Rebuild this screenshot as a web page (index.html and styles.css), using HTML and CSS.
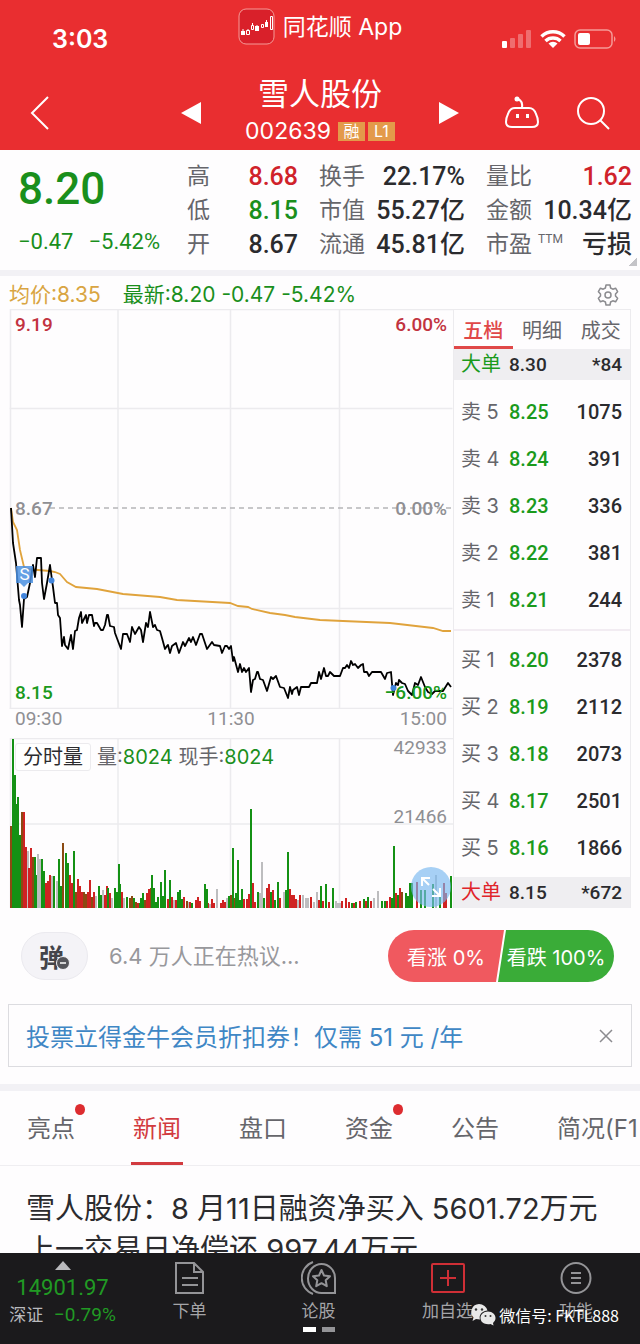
FILE: index.html
```
<!DOCTYPE html>
<html lang="zh-CN">
<head>
  <meta charset="UTF-8" />
  <meta name="viewport" content="width=device-width, initial-scale=1.0"/>
  <title>雪人股份 002639</title>
  <link rel="stylesheet" href="styles.css">
</head>
<body>
  <header class="header">
    <div class="status-bar">
      <span class="time">3:03</span>
      <div class="app-name">
        <svg width="38" height="38" viewBox="0 0 38 38" fill="none" stroke="#fff">
          <rect x="1" y="1" width="35" height="35" rx="7" stroke="#f59a96" fill="#d9202a"/>
          <path d="M3 23h4v4H3zM17 18h4v5h-4zM27 14h3v5h-3z" fill="#fff" stroke="none"/>
          <path d="M8.500 22.500h3v4h-3zM13.500 17.500h2v4h-2zM23.500 16.500h2v3h-2zM32.500 8.500h2v13h-2zM5 23v-2M10 22v-1M14.500 17v-2M19 18v-1M28.500 14v-2"/>
        </svg>
        <span>同花顺 App</span>
      </div>
      <div class="status-icons">
        <svg width="30" height="20" viewBox="0 0 30 20" fill="#fff">
          <rect x="0" y="12" width="5" height="7" rx="1"/>
          <g opacity=".3">
            <rect x="8" y="9" width="5" height="10" rx="1"/>
            <rect x="16" y="5" width="5" height="14" rx="1"/>
            <rect x="24" y="1" width="5" height="18" rx="1"/>
          </g>
        </svg>
        <svg width="26" height="20" viewBox="0 0 26 20" fill="none" stroke="#fff" stroke-width="3.500">
          <path d="M1.500 7.500a16.500 16.500 0 0 1 23 0M5.500 12a11 11 0 0 1 15 0"/>
          <path d="M13 19l-4.500-4.500a6.500 6.500 0 0 1 9 0z" fill="#fff" stroke="none"/>
        </svg>
        <svg width="42" height="20" viewBox="0 0 42 20">
          <rect x="1" y="1" width="37" height="18" rx="5" fill="none" stroke="#f59a96" stroke-width="1.500"/>
          <rect x="4" y="4" width="12" height="12" rx="2" fill="#fff"/>
          <path d="M40 7q3 3 0 6z" fill="#f59a96"/>
        </svg>
      </div>
    </div>
    <nav class="nav">
      <button class="icon-btn" aria-label="返回">
        <svg width="20" height="34" viewBox="0 0 20 34" fill="none" stroke="#fff" stroke-width="2"><path d="M18 1L2 17l16 16"/></svg>
      </button>
      <div class="stock">
        <button class="icon-btn" aria-label="上一只">
          <svg width="20" height="22" viewBox="0 0 20 22" fill="#fff"><path d="M20 0v22L0 11z"/></svg>
        </button>
        <div class="stock-title">
          <h1>雪人股份</h1>
          <p>002639 <span class="tag">融</span><span class="tag">L1</span></p>
        </div>
        <button class="icon-btn" aria-label="下一只">
          <svg width="20" height="22" viewBox="0 0 20 22" fill="#fff"><path d="M0 0v22l20-11z"/></svg>
        </button>
      </div>
      <div class="nav-actions">
        <button class="icon-btn" aria-label="助手">
          <svg width="36" height="34" viewBox="0 0 36 34" fill="none" stroke="#fff" stroke-width="2">
            <path d="M11 12h14q5 0 7 6 2 4 2 8 0 5-6 5H8q-6 0-6-5 0-4 2-8 2-6 7-6z"/>
            <path d="M18 12q1-7-4-9"/>
            <circle cx="13" cy="3" r="2.500" fill="#fff" stroke="none"/>
            <path d="M13.500 18v4M23.500 18v4" stroke-width="3"/>
          </svg>
        </button>
        <button class="icon-btn" aria-label="搜索">
          <svg width="34" height="34" viewBox="0 0 34 34" fill="none" stroke="#fff" stroke-width="2"><circle cx="15" cy="15" r="13"/><path d="M24 24l9 9"/></svg>
        </button>
      </div>
    </nav>
  </header>

  <main class="content">
    <section class="quote">
      <div class="quote-price">
        <strong>8.20</strong>
        <p><span>−0.47</span><span>−5.42%</span></p>
      </div>
      <dl class="quote-col">
        <div><dt>高</dt><dd class="up">8.68</dd></div>
        <div><dt>低</dt><dd class="down">8.15</dd></div>
        <div><dt>开</dt><dd>8.67</dd></div>
      </dl>
      <dl class="quote-col">
        <div><dt>换手</dt><dd>22.17%</dd></div>
        <div><dt>市值</dt><dd>55.27亿</dd></div>
        <div><dt>流通</dt><dd>45.81亿</dd></div>
      </dl>
      <dl class="quote-col">
        <div><dt>量比</dt><dd class="up">1.62</dd></div>
        <div><dt>金额</dt><dd>10.34亿</dd></div>
        <div><dt>市盈<sup>TTM</sup></dt><dd>亏损</dd></div>
      </dl>
    </section>

    <section class="market">
      <div class="summary">
        <span class="avg">均价:8.35</span>
        <span class="latest">最新:8.20 -0.47 -5.42%</span>
        <button class="icon-btn settings" aria-label="设置">
          <svg width="22" height="22" viewBox="0 0 22 22" fill="none" stroke="#8b8b8f" stroke-width="1.500" stroke-linejoin="round">
            <path d="M9 1h4l.6 3 2.200 1.200 2.800-1 2 3.500L18.500 10v2l2.100 2.300-2 3.500-2.800-1L13.600 18 13 21H9l-.6-3-2.200-1.200-2.800 1-2-3.500L3.500 12v-2L1.400 7.700l2-3.500 2.800 1L8.400 4z"/>
            <circle cx="11" cy="11" r="3"/>
          </svg>
        </button>
      </div>

      <div class="board">
        <div class="charts">
          <div class="chart price-chart">
            <svg class="plot" viewBox="0 0 444 400" preserveAspectRatio="none" fill="none">
              <path class="grid-line" d="M1 .5h443M.5 99.500h443M.5 299.500h443M.5 399.500h443M1.500 0v400M109 0v400M221.500 0v400M330.500 0v400"/>
              <path d="M41 199h403" stroke="#b5b5b8" stroke-width="1.500" stroke-dasharray="5 4"/>
              <path stroke="#e0a33c" stroke-width="1.800" d="M2 199L4 213 8 221 11 241 15 258 18 260 29 261 41 262 46 263 51 265 58 273 67 278 88 280 114 285 151 288 168 291 221 294 229 297 239 298 243 300 261 304 276 306 286 308 311 311 334 312 381 314 424 319 434 322 442 322"/>
              <path stroke="#000" stroke-width="1.800" stroke-linejoin="round" d="M2 199L4 234 7 254 10 291 11 296 13 318 15 290 18 288 21 274 24 256 26 268 28 249 32 249 33 274 35 290 38 274 41 256 43 271 44 278 46 294 48 294 49 306 51 309 53 337 55 328 56 336 59 340 62 326 64 340 66 322 68 321 70 309 72 303 73 314 77 306 78 314 80 306 83 306 85 317 86 314 88 314 92 321 94 321 96 316 98 306 99 306 101 317 105 318 106 324 112 340 114 325 118 325 121 333 123 318 126 325 130 318 132 321 134 333 137 314 139 318 141 303 144 318 146 316 148 321 151 322 153 329 156 340 158 337 159 336 161 344 163 337 167 334 170 344 174 333 176 337 180 329 182 333 184 328 187 336 191 325 193 325 198 340 203 333 205 336 211 337 213 344 216 337 218 337 220 340 222 337 224 352 225 348 229 363 231 355 233 363 235 359 237 363 240 359 242 383 244 371 246 370 248 363 249 363 251 370 254 371 258 382 262 368 264 370 267 367 271 378 275 379 279 389 281 378 283 385 284 381 288 378 290 386 292 378 300 378 302 374 308 374 310 363 312 370 315 359 317 367 319 367 321 363 325 367 331 367 334 359 336 359 338 356 340 359 342 352 344 356 346 355 349 359 352 356 354 355 355 363 358 363 360 367 363 363 372 363 376 370 378 364 382 363 384 386 387 374 389 376 390 371 393 374 396 375 399 382 403 386 406 374 409 376 412 368 416 378 419 383 423 385 426 382 434 382 439 374 442 378"/>
              <path d="M7 257h17v17h-5l-4 4-4-4H7z" fill="#4a8fe0" opacity=".85"/>
              <g fill="#4285dc"><circle cx="15" cy="287" r="3"/><circle cx="42.500" cy="271.500" r="3"/><circle cx="384.500" cy="379" r="3"/></g>
              <text class="sell-mark" x="15.500" y="271" text-anchor="middle">S</text>
            </svg>
            <div class="labels">
              <div class="up"><span>9.19</span><span>6.00%</span></div>
              <div><span>8.67</span><span>0.00%</span></div>
              <div class="down"><span>8.15</span><span>−6.00%</span></div>
            </div>
          </div>
          <div class="time-axis"><span>09:30</span><span>11:30</span><span>15:00</span></div>
          <div class="chart volume-chart">
            <svg class="plot" viewBox="0 0 444 170" preserveAspectRatio="none" fill="none" stroke-width="2">
              <path class="grid-line" d="M1 .5h443M1 86h443M1.500 0v170M109 0v170M221.500 0v170M330.500 0v170"/>
              <path stroke="#bdbdbf" d="M19 170v-57M29 170v-54M31 170v-49M43 170v-32M48 170v-27M87 170v-12M94 170v-18M103 170v-10M115 170v-10M165 170v-8M179 170v-6M201 170v-4M208 170v-19M218 170v-10M251 170v-15M253 170v-46M275 170v-16M289 170v-8M294 170v-13M297 170v-10M299 170v-10M305 170v-6M308 170v-16M327 170v-7M329 170v-5M331 170v-5M365 170v-10M369 170v-17M427 170v-33"/>
              <path stroke="#8b4a12" d="M2 170v-82M13 170v-96M24 170v-51M54 170v-65M67 170v-16M75 170v-16M77 170v-14M83 170v-11M121 170v-10M123 170v-12M127 170v-6M136 170v-8M142 170v-20M178 170v-7M222 170v-13M225 170v-10M393 170v-16"/>
              <path stroke="#cf2222" d="M15 170v-96M17 170v-61M20 170v-40M22 170v-60M37 170v-25M39 170v-27M41 170v-33M61 170v-33M63 170v-25M69 170v-29M71 170v-22M73 170v-16M79 170v-16M81 170v-28M85 170v-16M96 170v-13M98 170v-22M101 170v-15M113 170v-16M129 170v-5M138 170v-15M140 170v-19M159 170v-9M163 170v-11M167 170v-8M175 170v-11M181 170v-6M187 170v-8M189 170v-11M191 170v-7M199 170v-5M203 170v-9M205 170v-5M212 170v-5M214 170v-8M216 170v-6M235 170v-9M238 170v-9M240 170v-14M244 170v-25M246 170v-6M258 170v-20M260 170v-24M264 170v-18M271 170v-10M281 170v-19M283 170v-13M285 170v-13M287 170v-9M291 170v-13M302 170v-11M310 170v-8M314 170v-7M320 170v-6M333 170v-7M337 170v-10M340 170v-6M345 170v-5M351 170v-7M357 170v-7M362 170v-7M378 170v-7M381 170v-11M387 170v-15M391 170v-20M408 170v-26M435 170v-25M437 170v-15"/>
              <path stroke="#149114" d="M4 170v-169M6 170v-133M7 170v-104M9 170v-111M11 170v-73M26 170v-51M27 170v-33M33 170v-49M35 170v-37M45 170v-32M50 170v-49M52 170v-22M57 170v-55M59 170v-45M65 170v-57M90 170v-22M92 170v-13M99 170v-20M106 170v-20M108 170v-16M110 170v-44M111 170v-24M118 170v-11M125 170v-10M131 170v-5M132 170v-10M134 170v-15M143 170v-33M145 170v-20M147 170v-6M149 170v-11M152 170v-26M154 170v-12M156 170v-38M161 170v-28M169 170v-16M171 170v-18M173 170v-9M183 170v-5M196 170v-24M198 170v-19M220 170v-12M224 170v-60M227 170v-15M229 170v-48M231 170v-8M233 170v-19M242 170v-99M249 170v-16M255 170v-10M262 170v-16M266 170v-8M269 170v-26M277 170v-18M279 170v-56M312 170v-22M317 170v-24M324 170v-20M343 170v-5M347 170v-6M355 170v-9M359 170v-11M373 170v-7M376 170v-7M383 170v-10M385 170v-62M389 170v-13M397 170v-15M399 170v-12M401 170v-25M403 170v-25M412 170v-18M416 170v-18M424 170v-24M431 170v-12M442 170v-32"/>
            </svg>
            <div class="legend">
              <button class="indicator">分时量</button>
              <span>量:<b>8024</b></span>
              <span>现手:<b>8024</b></span>
            </div>
            <div class="volume-scale"><span>42933</span><span>21466</span></div>
            <button class="expand" aria-label="全屏">
              <svg width="20" height="20" viewBox="0 0 20 20" fill="none" stroke="#fff" stroke-width="2"><path d="M1 9V1h8M1 1l7 7M19 11v8h-8M19 19l-7-7"/></svg>
            </button>
          </div>
        </div>

        <div class="orders">
          <div class="order-tabs">
            <button class="active">五档</button>
            <button>明细</button>
            <button>成交</button>
          </div>
          <table class="order-table">
            <tbody class="big-order">
              <tr><th class="down" scope="row">大单</th><td>8.30</td><td>*84</td></tr>
            </tbody>
            <tbody class="levels asks">
              <tr><th scope="row">卖 5</th><td>8.25</td><td>1075</td></tr>
              <tr><th scope="row">卖 4</th><td>8.24</td><td>391</td></tr>
              <tr><th scope="row">卖 3</th><td>8.23</td><td>336</td></tr>
              <tr><th scope="row">卖 2</th><td>8.22</td><td>381</td></tr>
              <tr><th scope="row">卖 1</th><td>8.21</td><td>244</td></tr>
            </tbody>
            <tbody class="levels bids">
              <tr><th scope="row">买 1</th><td>8.20</td><td>2378</td></tr>
              <tr><th scope="row">买 2</th><td>8.19</td><td>2112</td></tr>
              <tr><th scope="row">买 3</th><td>8.18</td><td>2073</td></tr>
              <tr><th scope="row">买 4</th><td>8.17</td><td>2501</td></tr>
              <tr><th scope="row">买 5</th><td>8.16</td><td>1866</td></tr>
            </tbody>
            <tbody class="big-order">
              <tr><th class="up" scope="row">大单</th><td>8.15</td><td>*672</td></tr>
            </tbody>
          </table>
        </div>
      </div>
    </section>

    <section class="discuss">
      <button class="danmu" aria-label="弹幕">弹
        <svg width="14" height="14" viewBox="0 0 14 14"><circle cx="7" cy="7" r="6.500" fill="#55555a" stroke="#f2f1f5"/><path d="M4 7h6" stroke="#fff" stroke-width="1.500"/></svg>
      </button>
      <input class="discuss-input" type="text" aria-label="参与讨论" placeholder="6.4 万人正在热议...">
      <div class="vote">
        <button class="vote-up">看涨 0%</button>
        <button class="vote-down">看跌 100%</button>
      </div>
    </section>

    <div class="promo">
      <a href="#">投票立得金牛会员折扣券！仅需 51 元 /年</a>
      <button class="icon-btn" aria-label="关闭">
        <svg width="14" height="14" viewBox="0 0 14 14" stroke="#8b8b8f" stroke-width="1.500"><path d="M1 1l12 12M13 1L1 13"/></svg>
      </button>
    </div>

    <nav class="tabs">
      <a href="#" class="dot">亮点</a>
      <a href="#" class="active">新闻</a>
      <a href="#">盘口</a>
      <a href="#" class="dot">资金</a>
      <a href="#">公告</a>
      <a href="#">简况(F1</a>
    </nav>

    <article class="news">雪人股份：8 月11日融资净买入 5601.72万元<br>上一交易日净偿还 997.44万元</article>
  </main>

  <footer class="toolbar">
    <a href="#" class="index">
      <svg width="16" height="9" viewBox="0 0 16 9" fill="#b9b9bc"><path d="M8 0l8 9H0z"/></svg>
      <span class="index-value">14901.97</span>
      <span class="index-change">深证 <b>−0.79%</b></span>
    </a>
    <a href="#">
      <svg width="34" height="34" viewBox="0 0 34 34" fill="none" stroke="#949497" stroke-width="2"><path d="M3 2h18l9 9v21H3zM21 2v9h9M9 17h16M9 24h16"/></svg>
      下单
    </a>
    <a href="#">
      <svg width="36" height="34" viewBox="0 0 36 34" fill="none" stroke="#949497" stroke-width="2">
        <path d="M20.500 3A13.500 14 0 0 1 34 17v15H20.500a13.500 14.500 0 0 1 0-29zM12 1a17 17 0 0 0 0 32"/>
        <path d="M20.500 9l2.500 5.500 6 .7-4.300 4 1.100 6-5.300-3-5.300 3 1.100-6-4.300-4 6-.7z" stroke-linejoin="round"/>
      </svg>
      论股
      <span class="pager"><i></i><i></i></span>
    </a>
    <a href="#">
      <svg width="34" height="34" viewBox="0 0 34 34" fill="none" stroke="#cf2f36" stroke-width="2"><rect x="1" y="3" width="32" height="28" rx="1"/><path d="M17 9v16M9 17h16"/></svg>
      加自选
    </a>
    <a href="#">
      <svg width="34" height="34" viewBox="0 0 34 34" fill="none" stroke="#949497" stroke-width="2"><ellipse cx="17" cy="17" rx="14.500" ry="15"/><path d="M12 12h10M12 17h10M12 22h10"/></svg>
      功能
    </a>
    <div class="watermark">
      <svg width="26" height="22" viewBox="0 0 26 22">
        <path d="M9 0a9 8 0 0 1 8.500 6.500C12 7 8.500 11 10 15.500L6 15l-3.500 2 1-3.500A8 8 0 0 1 9 0z" fill="#e8e8e8"/>
        <path d="M18 7.500c4.500 0 7.500 3 7.500 6.500 0 2-1 3.500-2.500 5l.5 2.500-3-1.500c-5.500 1-10-1.500-10-6 0-3.500 3-6.500 7.500-6.500z" fill="#e8e8e8"/>
        <g fill="#333"><circle cx="6" cy="5.500" r="1.200"/><circle cx="12" cy="5.500" r="1.200"/><circle cx="15.500" cy="12" r="1"/><circle cx="20.500" cy="12" r="1"/></g>
      </svg>
      微信号: FKTL888
    </div>
  </footer>
</body>
</html>
```
FILE: styles.css
```
* {
  box-sizing: border-box;
}

body {
  margin: 0;
  height: 100vh;
  display: flex;
  flex-direction: column;
  overflow: hidden;
  background: #fefdfe;
  color: #2b2b2e;
  font-family: Inter, 'Noto Sans CJK SC', sans-serif;
  font-size: 20px;
  font-weight: 400;
}

h1, p, dl, dd {
  margin: 0;
}

button {
  padding: 0;
  border: none;
  background: none;
  color: inherit;
  font: inherit;
  cursor: pointer;
}

a {
  color: inherit;
  text-decoration: none;
}

svg {
  display: block;
  flex: none;
}

.up {
  color: #d0222a;
}

.down {
  color: #1a8f1c;
}

.icon-btn {
  display: flex;
}

/* header */
.header {
  flex: none;
  background: #e92e30;
  color: #fff;
}

.status-bar {
  display: grid;
  grid-template-columns: 1fr auto 1fr;
  align-items: end;
  height: 56px;
}

.time {
  padding-left: 52px;
  font-size: 25px;
  font-weight: 600;
  line-height: 34px;
}

.app-name {
  display: flex;
  align-items: center;
  align-self: start;
  gap: 7px;
  padding-top: 8px;
  font-size: 23px;
  line-height: 38px;
}

.status-icons {
  display: flex;
  align-items: center;
  justify-content: flex-end;
  gap: 8px;
  height: 34px;
  padding-right: 24px;
}

.nav {
  display: grid;
  grid-template-columns: 1fr 278px 1fr;
  align-items: center;
  height: 94px;
  padding: 20px 30px 0;
}

.stock,
.nav-actions {
  display: flex;
  align-items: center;
  justify-content: space-between;
}

.nav-actions {
  justify-content: flex-end;
  gap: 36px;
}

.stock-title {
  text-align: center;
}

.stock-title h1 {
  font-size: 31px;
  font-weight: 400;
  line-height: 36px;
}

.stock-title p {
  display: flex;
  align-items: center;
  justify-content: center;
  gap: 3px;
  font-size: 23px;
  line-height: 38px;
}

.tag {
  width: 27px;
  background: #e39a4a;
  font-size: 16px;
  line-height: 19px;
}

.tag:first-child {
  margin-left: 4px;
}

/* quote */
.quote {
  position: relative;
  display: grid;
  grid-template-columns: 148fr 111fr 146fr 146fr;
  column-gap: 21px;
  height: 120px;
  padding: 10px 8px 0 18px;
  font-family: Roboto, 'Noto Sans CJK SC', sans-serif;
}

.quote::after {
  content: '';
  position: absolute;
  right: 3px;
  bottom: 4px;
  width: 8px;
  height: 8px;
  background: linear-gradient(135deg, transparent 50%, #c4c4c8 50%);
}

.quote-price {
  color: #1a8f1c;
}

.quote-price strong {
  display: block;
  font-size: 44px;
  font-weight: 500;
  line-height: 58px;
}

.quote-price p {
  display: flex;
  gap: 15px;
  padding-top: 8px;
  font-size: 22px;
  line-height: 32px;
}

.quote-col div {
  display: flex;
  justify-content: space-between;
  line-height: 34px;
}

.quote-col dt {
  color: #66666b;
  font-size: 23px;
  white-space: nowrap;
}

.quote-col dd {
  font-size: 25px;
  font-weight: 500;
}

.quote-col sup {
  margin-left: 6px;
  font-size: 12px;
  line-height: 1;
}

/* market */
.market {
  padding: 0 9px;
  border-top: 6px solid #f2f1f5;
}

.summary {
  display: flex;
  align-items: center;
  gap: 22px;
  height: 33px;
  padding-top: 4px;
  font-size: 21px;
  line-height: 28px;
}

.avg {
  color: #d9a542;
}

.latest {
  color: #1a8f1c;
}

.settings {
  margin-left: auto;
  margin-right: 12px;
}

.board {
  display: grid;
  grid-template-columns: 444fr 178fr;
}

.chart {
  display: grid;
  position: relative;
  font-family: Roboto, sans-serif;
}

.plot {
  grid-area: 1 / 1;
  width: 100%;
  height: 400px;
}

.grid-line {
  stroke: #ecebee;
  stroke-width: 1.5px;
}

.sell-mark {
  fill: #fff;
  font-size: 17px;
}

.labels {
  grid-area: 1 / 1;
  z-index: 1;
  display: flex;
  flex-direction: column;
  justify-content: space-between;
  padding: 4px 6px;
  color: #8f8f93;
  font-size: 19px;
  font-weight: 500;
  line-height: 24px;
}

.labels .up {
  color: #c23340;
}

.labels .down {
  color: #1a9a1c;
}

.labels div,
.time-axis {
  display: flex;
  justify-content: space-between;
}

.time-axis {
  padding: 0 6px;
  color: #8f8f93;
  font-family: Roboto, sans-serif;
  font-size: 19px;
  line-height: 20px;
  height: 29px;
}

.volume-chart .plot {
  height: 170px;
}

.legend {
  grid-area: 1 / 1;
  z-index: 1;
  align-self: start;
  display: flex;
  align-items: center;
  gap: 6px;
  padding: 5px 6px;
  color: #66666b;
  font-family: Inter, 'Noto Sans CJK SC', sans-serif;
  line-height: 26px;
}

.legend b {
  color: #1a8f1c;
  font-weight: 400;
}

.indicator {
  padding: 0 7px;
  border: 1px solid #ecebee;
  border-radius: 3px;
  background: #fff;
  color: #2b2b2e;
}

.volume-scale {
  grid-area: 1 / 1;
  justify-self: end;
  display: flex;
  flex-direction: column;
  gap: 45px;
  margin-top: -2px;
  padding-right: 6px;
  color: #8f8f93;
  font-size: 19px;
  line-height: 24px;
}

.expand {
  position: absolute;
  right: 2px;
  bottom: 1px;
  display: grid;
  place-items: center;
  width: 40px;
  height: 40px;
  border-radius: 50%;
  background: rgba(120, 185, 240, 0.65);
}

/* order book */
.orders {
  border: 1px solid #ecebee;
  border-width: 1px 1px 0 1px;
}

.order-tabs {
  display: flex;
  height: 39px;
  color: #66666b;
}

.order-tabs button {
  flex: 1;
}

.order-tabs .active {
  box-shadow: inset 0 -3px #e04848;
  color: #e04848;
  font-weight: 500;
}

.order-table {
  width: 100%;
  border-collapse: collapse;
}

.order-table th,
.order-table td {
  padding: 0;
  font-weight: 500;
  line-height: 47px;
  text-align: left;
}

.order-table th {
  width: 55px;
  padding-left: 7px;
  color: #66666b;
  font-weight: 400;
  white-space: nowrap;
}

.order-table td {
  font-family: Roboto, sans-serif;
}

.order-table td:last-child {
  padding-right: 8px;
  text-align: right;
}

.levels td:nth-child(2) {
  color: #1a9a1c;
}

.asks tr:first-child > * {
  padding-top: 9px;
}

.asks tr:last-child > * {
  padding-bottom: 5px;
}

.bids tr:first-child > * {
  padding-top: 6px;
}

.bids tr:last-child > * {
  padding-bottom: 5px;
}

.bids {
  border-top: 2px solid #f2ecf2;
}

.big-order {
  background: #efeef1;
}

.order-table .big-order th,
.order-table .big-order td {
  line-height: 31px;
}

.order-table .big-order td {
  font-size: 19px;
}

.order-table .big-order .down {
  color: #1a9a1c;
}

.order-table .big-order .up {
  color: #e0242a;
}

/* discuss */
.discuss {
  display: flex;
  align-items: center;
  gap: 21px;
  height: 96px;
  padding: 0 26px 0 21px;
}

.danmu {
  display: flex;
  align-items: center;
  justify-content: center;
  width: 67px;
  height: 48px;
  border: 1px solid #ebeaef;
  border-radius: 24px;
  background: #f4f3f7;
  color: #44444a;
  font-size: 25px;
  font-weight: 700;
}

.danmu svg {
  align-self: flex-end;
  margin: 0 0 9px -8px;
}

.discuss-input {
  flex: 1;
  min-width: 0;
  padding: 0;
  border: none;
  outline: none;
  background: none;
  font: inherit;
  font-size: 22px;
}

.discuss-input::placeholder {
  color: #98989c;
}

.vote {
  display: flex;
  color: #fff;
}

.vote button {
  width: 116px;
  height: 52px;
}

.vote .vote-up {
  border-radius: 26px 0 0 26px;
  background: #f0595f;
  clip-path: polygon(0 0, 100% 0, calc(100% - 8px) 100%, 0 100%);
}

.vote .vote-down {
  margin-left: -6px;
  border-radius: 0 26px 26px 0;
  background: #3aac38;
  clip-path: polygon(8px 0, 100% 0, 100% 100%, 0 100%);
}

.promo {
  display: flex;
  align-items: center;
  justify-content: space-between;
  height: 63px;
  margin: 0 8px 17px;
  padding: 0 18px 0 17px;
  border: 1px solid #dcdce0;
  color: #3f87c5;
  font-size: 24px;
}

/* tabs */
.tabs {
  display: flex;
  gap: 58px;
  height: 82px;
  padding-left: 27px;
  border-top: 7px solid #f2f1f5;
  border-bottom: 1px solid #efeef1;
  color: #66666b;
  font-size: 24px;
  line-height: 76px;
  white-space: nowrap;
}

.tabs a {
  position: relative;
  height: 74px;
}

.tabs .active {
  margin: 0 -2px;
  padding: 0 2px;
  border-bottom: 3px solid #d23b40;
  color: #d23b40;
}

.tabs .dot::after {
  content: '';
  position: absolute;
  top: 13px;
  right: -10px;
  width: 10px;
  height: 11px;
  border-radius: 50%;
  background: #dd2c30;
}

.news {
  padding: 22px 26px 0;
  font-size: 29px;
  line-height: 41px;
  white-space: nowrap;
}

/* bottom toolbar */
.toolbar {
  position: relative;
  z-index: 1;
  flex: none;
  display: grid;
  grid-template-columns: 125fr 129fr 129fr 129fr 128fr;
  height: 91px;
  background: #1b1a1c;
  color: #a5a5a8;
  font-size: 17px;
}

.content {
  flex: 1;
  min-height: 0;
  overflow: hidden;
}

.toolbar a {
  display: flex;
  flex-direction: column;
  align-items: center;
  padding-top: 8px;
  line-height: 32px;
}

.toolbar .index {
  color: #b9b9bc;
  line-height: 27px;
}

.index-value {
  padding-top: 4px;
  color: #219a24;
  font-family: Roboto, sans-serif;
  font-size: 22px;
}

.index-change b {
  margin-left: 6px;
  color: #219a24;
  font-family: Roboto, sans-serif;
  font-size: 19px;
  font-weight: 400;
}

.pager {
  display: flex;
  gap: 6px;
}

.pager i {
  width: 13px;
  height: 5px;
  background: #fff;
}

.pager i + i {
  background: #949497;
}

.watermark {
  position: absolute;
  right: 21px;
  bottom: 18px;
  display: flex;
  align-items: center;
  gap: 3px;
  color: #fff;
  font-family: 'Noto Sans CJK SC', sans-serif;
  font-size: 16px;
  line-height: 22px;
}
```
